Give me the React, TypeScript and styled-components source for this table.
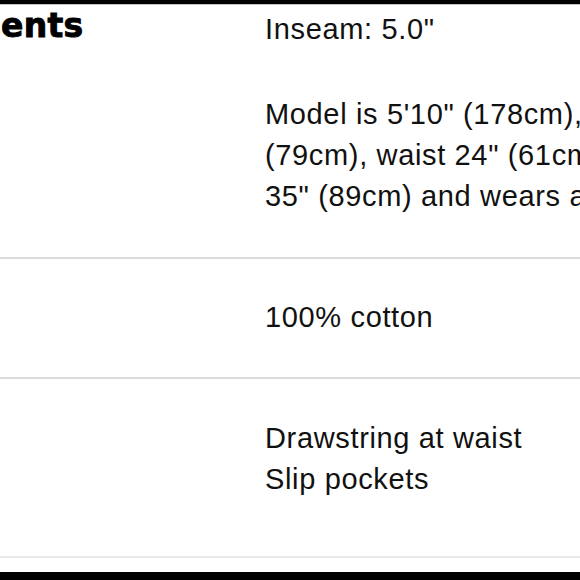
import React from "react";
import styled, { createGlobalStyle } from "styled-components";

const GlobalStyle = createGlobalStyle`
  html, body {
    margin: 0;
    padding: 0;
    background: #ffffff;
    overflow: hidden;
  }
`;

const Frame = styled.div`
  width: 580px;
  height: 580px;
  display: flex;
  flex-direction: column;
  overflow: hidden;
  background: #ffffff;
`;

const TopBar = styled.div`
  flex: none;
  height: 4px;
  background: #000;
  border-bottom: 1px solid #c4c4c4;
`;

const BottomBar = styled.div`
  flex: none;
  height: 8px;
  background: #000;
`;

const Table = styled.div`
  flex: 1;
  display: flex;
  flex-direction: column;
  margin-left: -195px;
`;

const Row = styled.div<{ $pt: number; $pb: number; $line?: string }>`
  display: grid;
  grid-template-columns: 460px 1fr;
  padding: ${({ $pt }) => $pt}px 0 ${({ $pb }) => $pb}px;
  border-bottom: 2px solid ${({ $line }) => $line || "#dadada"};
`;

const Label = styled.h3`
  margin: -4px 0 0;
  font-family: "DejaVu Sans", "Liberation Sans", sans-serif;
  font-weight: 700;
  font-size: 33px;
  line-height: 41px;
  letter-spacing: 0.3px;
  color: #000;
  -webkit-text-stroke: 0.9px #000;
  white-space: nowrap;
`;

const Value = styled.div`
  display: flex;
  flex-direction: column;
  gap: 44px;
  font-family: "Liberation Sans", Arial, sans-serif;
  font-size: 29px;
  line-height: 41px;
  letter-spacing: 0.65px;
  color: #111;
  white-space: nowrap;
`;

const Para = styled.p`
  margin: 0;
`;

const Filler = styled.div`
  flex: 1;
`;

export default function App() {
  return (
    <Frame>
      <GlobalStyle />
      <TopBar />
      <Table>
        <Row $pt={4} $pb={40}>
          <Label>Measurements</Label>
          <Value>
            <Para>Inseam: 5.0"</Para>
            <Para>
              Model is 5'10" (178cm), bust 31"
              <br />
              (79cm), waist 24" (61cm), hips
              <br />
              35" (89cm) and wears a size XS
            </Para>
          </Value>
        </Row>
        <Row $pt={38} $pb={39}>
          <Label>Fabric</Label>
          <Value>
            <Para>100% cotton</Para>
          </Value>
        </Row>
        <Row $pt={39} $pb={56} $line="#e8e8e8">
          <Label>Details</Label>
          <Value>
            <Para>
              Drawstring at waist
              <br />
              Slip pockets
            </Para>
          </Value>
        </Row>
        <Filler />
      </Table>
      <BottomBar />
    </Frame>
  );
}
